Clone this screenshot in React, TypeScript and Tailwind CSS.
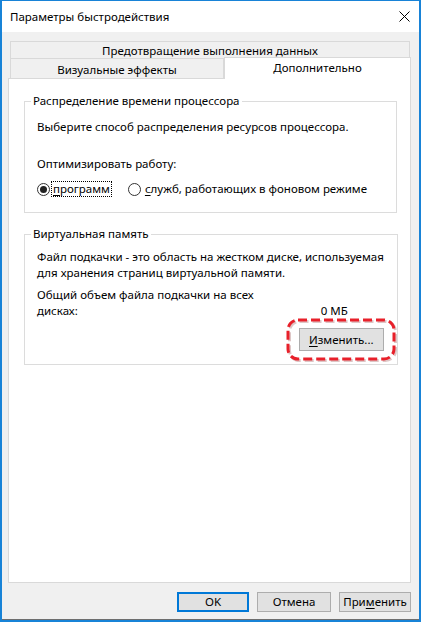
import React from "react";

const font = { fontFamily: '"Noto Sans", "Liberation Sans", sans-serif' };

const Radio = ({ checked }: { checked?: boolean }) => (
  <span className="w-[13px] h-[13px] rounded-full border border-[#333] bg-white flex items-center justify-center shrink-0">
    {checked && <span className="w-[7px] h-[7px] rounded-full bg-[#222]" />}
  </span>
);

const Btn = ({ children, primary, className = "" }: any) => (
  <button
    className={
      "h-[20px] flex items-center justify-center bg-[#e1e1e1] text-black leading-none " +
      (primary ? "border-2 border-[#0078d7] " : "border border-[#adadad] ") +
      className
    }
  >
    {children}
  </button>
);

export default function App() {
  return (
    <div
      className="w-[421px] h-[622px] flex flex-col border-x-2 border-t border-b-2 border-[#1883d7] bg-[#f0f0f0] text-black text-[11.5px] leading-[16px] whitespace-nowrap"
      style={font}
    >
      {/* TITLE */}
      <div className="h-[31px] bg-white flex items-center justify-between pl-[8px] pr-[9px]">
        <span>Параметры быстродействия</span>
        <svg width="11" height="11" viewBox="0 0 11 11">
          <path d="M0.5 0.5 L10.5 10.5 M10.5 0.5 L0.5 10.5" stroke="#000" strokeWidth="1" />
        </svg>
      </div>

      {/* BODY */}
      <div className="flex-1 flex flex-col border-b border-[#6e6e6e]">
        <div className="ml-[6px] mt-[9px] w-[403px]">
          {/* TABS */}
          <div className="ml-[2px] w-[400px] h-[17px] border border-b-0 border-[#d9d9d9] flex items-end justify-center leading-[14px]">
            Предотвращение выполнения данных
          </div>
          <div className="flex items-end h-[20px]">
            <div className="ml-[2px] w-[214px] h-[20px] border border-b-0 border-[#d9d9d9] flex items-center justify-center pt-[3px]">
              Визуальные эффекты
            </div>
            <div className="relative z-10 -mb-[1px] w-[187px] h-[22px] shrink-0 bg-white border border-b-0 border-[#d9d9d9] flex items-start justify-center pt-[2px]">
              Дополнительно
            </div>
          </div>

          {/* PANEL */}
          <div className="h-[505px] bg-white border border-[#d9d9d9] pl-[15px] pt-[14px]">
            <fieldset className="w-[373px] border border-[#dcdcdc]">
              <legend className="ml-[6px] px-[2px] leading-[16px]">
                Распределение времени процессора
              </legend>
              <div className="pl-[12px] pb-[15px]">
                <p className="mt-[10px]">Выберите способ распределения ресурсов процессора.</p>
                <p className="mt-[21px]">Оптимизировать работу:</p>
                <div className="mt-[9px] flex items-center h-[16px]">
                  <Radio checked />
                  <span className="ml-[2px] outline outline-1 outline-dotted outline-black px-[1px] leading-[14px]">
                    <span className="underline underline-offset-2">п</span>рограмм
                  </span>
                  <span className="ml-[17px]">
                    <Radio />
                  </span>
                  <span className="ml-[4px]">
                    <span className="underline underline-offset-2">с</span>лужб, работающих в фоновом режиме
                  </span>
                </div>
              </div>
            </fieldset>

            <fieldset className="mt-[13px] w-[373px] border border-[#dcdcdc]">
              <legend className="ml-[6px] px-[2px] leading-[16px]">Виртуальная память</legend>
              <div className="pl-[12px] pr-[13px] pb-[13px]">
                <p className="mt-[7px]">Файл подкачки - это область на жестком диске, используемая</p>
                <p>для хранения страниц виртуальной памяти.</p>
                <p className="mt-[6px]">Общий объем файла подкачки на всех</p>
                <div className="flex justify-between pr-[36px]">
                  <span>дисках:</span>
                  <span>0 МБ</span>
                </div>
                <div className="mt-[9px] flex justify-end">
                  <div className="relative">
                    <Btn className="w-[85px] h-[23px]">
                      <span className="underline underline-offset-2">И</span>зменить...
                    </Btn>
                    <svg
                      className="absolute -left-[13px] -top-[10px] pointer-events-none"
                      width="112"
                      height="45"
                      viewBox="0 0 112 45"
                    >
                      <rect
                        x="2.5"
                        y="2.5"
                        width="106"
                        height="39"
                        rx="10"
                        fill="none"
                        stroke="#7a1a1a"
                        strokeOpacity="0.25"
                        strokeWidth="3"
                        strokeDasharray="9 4"
                        transform="translate(1 1)"
                      />
                      <rect
                        x="2"
                        y="2"
                        width="106"
                        height="39"
                        rx="10"
                        fill="none"
                        stroke="#e8202a"
                        strokeWidth="3"
                        strokeDasharray="9 4"
                      />
                    </svg>
                  </div>
                </div>
              </div>
            </fieldset>
          </div>
        </div>

        {/* BOTTOM BUTTONS */}
        <div className="mt-[9px] flex justify-end gap-[8px] pr-[8px]">
          <Btn primary className="w-[72px]">OK</Btn>
          <Btn className="w-[74px]">Отмена</Btn>
          <Btn className="w-[72px]">
            При<span className="underline underline-offset-2">м</span>енить
          </Btn>
        </div>
      </div>
    </div>
  );
}
